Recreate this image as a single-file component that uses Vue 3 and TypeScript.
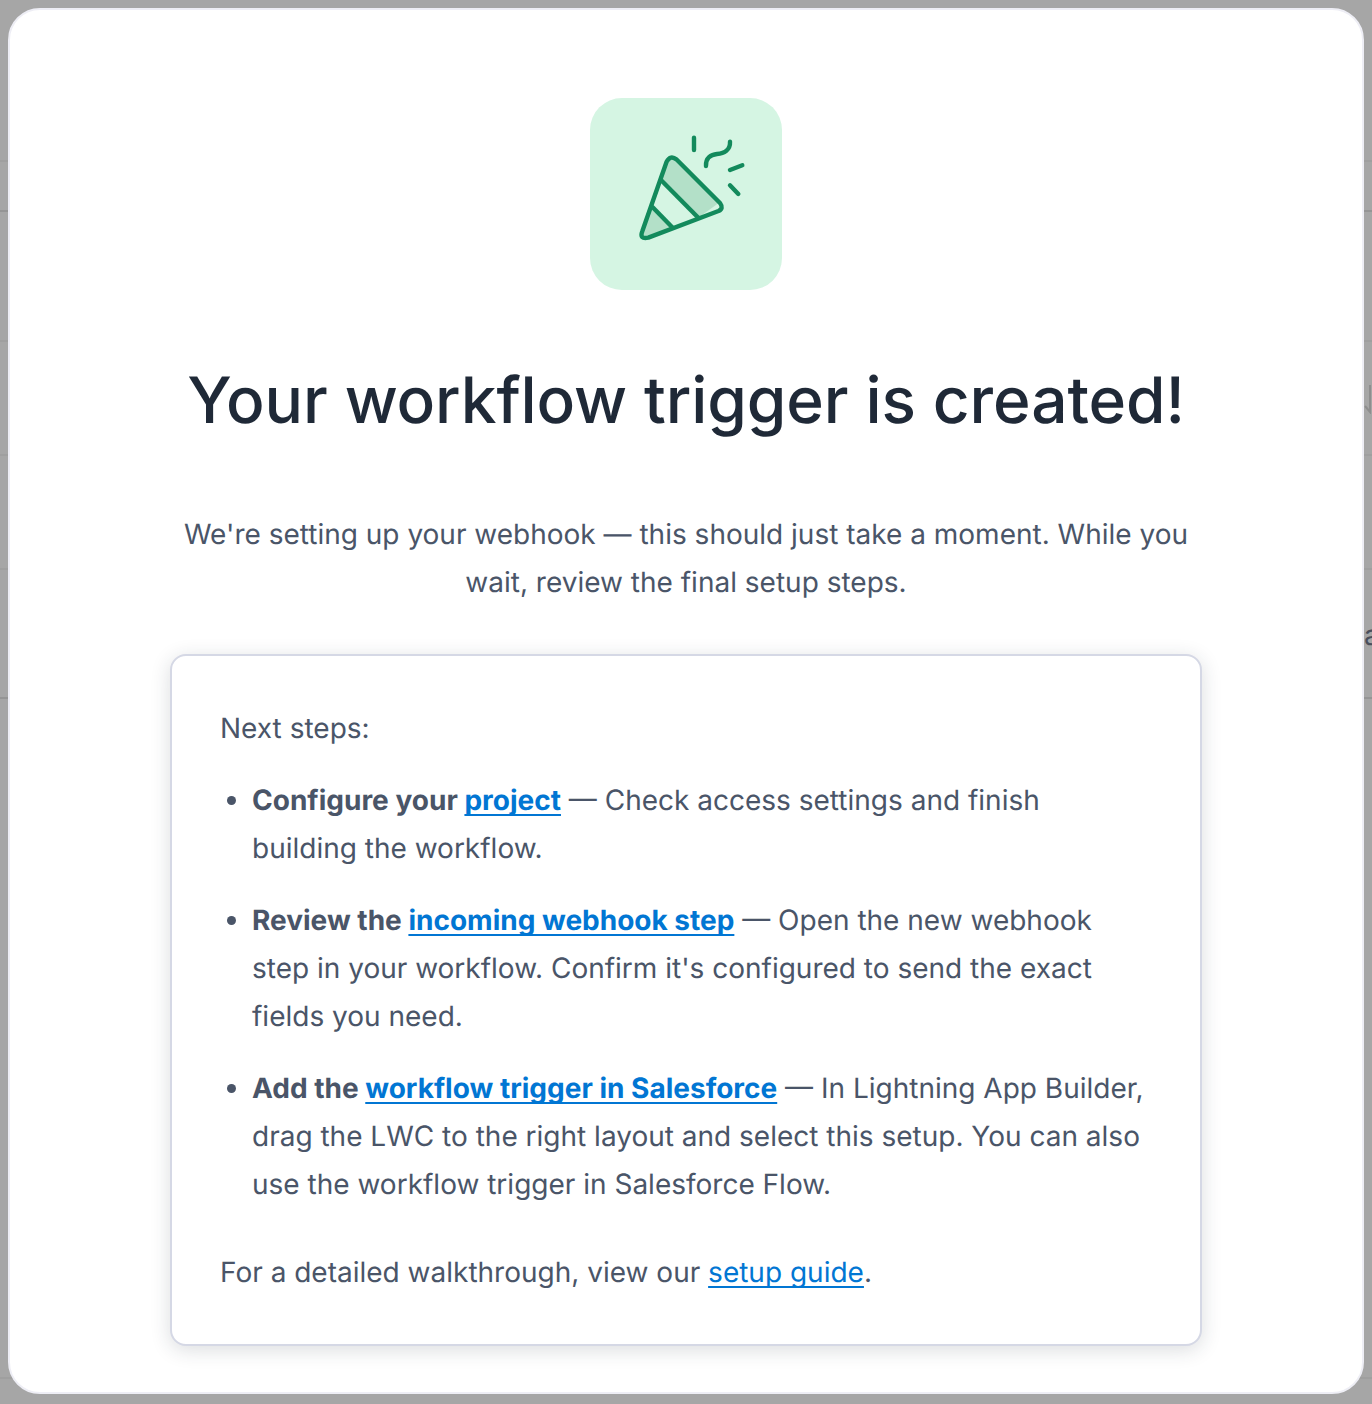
<template>
  <div class="page">
    <div class="backdrop" aria-hidden="true">
      <div class="backdrop__row" style="height: 162px"></div>
      <div class="backdrop__row backdrop__row--dark" style="height: 50px"></div>
      <div class="backdrop__row" style="height: 130px"></div>
      <div class="backdrop__row" style="height: 114px"></div>
      <div class="backdrop__row" style="height: 114px"></div>
      <div class="backdrop__row backdrop__row--dark" style="height: 129px"></div>
      <div class="backdrop__row" style="height: 680px"></div>
      <span class="backdrop__letter">a</span>
      <svg class="backdrop__arrow" viewBox="0 0 8 30" width="8" height="30">
        <path d="M6 1v27L1 22" fill="none" stroke="#8e8e8e" stroke-width="2" />
      </svg>
    </div>

    <section class="modal">
      <div class="modal__icon">
        <svg viewBox="0 0 192 192" width="192" height="192" aria-hidden="true">
          <path d="M77 64 80 60Q84 58 87.3 62L130 104 108.3 119.7 71.7 82.7ZM62.7 109.3 81.7 128.7 58 139.5Q50 142.5 52 134Z" fill="#b3e0c8" />
          <g fill="none" stroke="#138a5c" stroke-width="4.4" stroke-linecap="round" stroke-linejoin="round">
            <path d="M52.3 133.2 76.6 63.7Q80.5 56.5 86.6 61.5L130 105Q134 110.5 128.5 113L58.3 139.6Q49 141.5 52.3 133.2Z" />
            <path d="M71.7 82.7 108.3 119.7" />
            <path d="M62.7 109.3 81.7 128.7" />
            <path d="M104 39.7V52" />
            <path d="M116 68C115.5 60 121 56.5 127 56C134 55.5 140.5 52 140 43.7" />
            <path d="M140 72 152.3 67.3" />
            <path d="M140 87.3 148.3 96" />
          </g>
        </svg>
      </div>

      <h1 class="modal__title">Your workflow trigger is created!</h1>
      <p class="modal__lead">
        We're setting up your webhook — this should just take a moment. While you wait, review the final setup steps.
      </p>

      <div class="card">
        <p class="card__text">Next steps:</p>
        <ul class="steps">
          <li v-for="step in steps" :key="step.link" class="steps__item">
            <strong>{{ step.lead }} <a href="#" class="link">{{ step.link }}</a></strong> — {{ step.body }}
          </li>
        </ul>
        <p class="card__text">
          For a detailed walkthrough, view our <a href="#" class="link">setup guide</a>.
        </p>
      </div>
    </section>
  </div>
</template>

<script setup lang="ts">
interface Step {
  lead: string
  link: string
  body: string
}

const steps: Step[] = [
  {
    lead: 'Configure your',
    link: 'project',
    body: 'Check access settings and finish building the workflow.',
  },
  {
    lead: 'Review the',
    link: 'incoming webhook step',
    body: "Open the new webhook step in your workflow. Confirm it's configured to send the exact fields you need.",
  },
  {
    lead: 'Add the',
    link: 'workflow trigger in Salesforce',
    body: 'In Lightning App Builder, drag the LWC to the right layout and select this setup. You can also use the workflow trigger in Salesforce Flow.',
  },
]
</script>

<style>
html,
body {
  margin: 0;
  background: #a6a6a6;
}
</style>

<style scoped>
.page {
  position: relative;
  width: 1372px;
  height: 1404px;
  overflow: hidden;
  background: #a6a6a6;
  font-family: Inter, "Liberation Sans", sans-serif;
  text-rendering: geometricPrecision;
}

.backdrop {
  position: absolute;
  inset: 0;
}
.backdrop__row {
  box-sizing: border-box;
  border-bottom: 2px solid #9f9f9f;
}
.backdrop__row--dark {
  border-bottom-color: #959595;
}
.backdrop__letter {
  position: absolute;
  left: 1364px;
  top: 618px;
  font-size: 28px;
  line-height: 34px;
  color: #4a4f5c;
}
.backdrop__arrow {
  position: absolute;
  left: 1364px;
  top: 384px;
}

.modal {
  position: absolute;
  left: 8px;
  top: 8px;
  box-sizing: border-box;
  width: 1356px;
  height: 1386px;
  display: flex;
  flex-direction: column;
  align-items: center;
  padding-top: 88px;
  background: #fff;
  border: 2px solid #eeeef5;
  border-radius: 32px;
}

.modal__icon {
  width: 192px;
  height: 192px;
  border-radius: 32px;
  background: #d5f5e3;
}
.modal__icon svg {
  display: block;
}

.modal__title {
  margin: 65px 0 0;
  font-size: 64px;
  line-height: 92px;
  font-weight: 500;
  letter-spacing: -0.1px;
  color: #1f2937;
  white-space: nowrap;
}

.modal__lead {
  width: 1030px;
  margin: 63px 0 0;
  font-size: 28px;
  line-height: 48px;
  text-align: center;
  color: #4a5568;
}

.card {
  box-sizing: border-box;
  width: 1032px;
  margin-top: 48px;
  padding: 48px;
  background: #fff;
  border: 2px solid #d5d8e5;
  border-radius: 16px;
  box-shadow: 0 4px 20px rgba(31, 41, 55, 0.16);
  font-size: 28px;
  line-height: 48px;
  color: #4a5568;
}

.card__text {
  margin: 0;
}

.steps {
  margin: 24px 0 40px;
  padding: 0 4px 0 32px;
}
.steps__item + .steps__item {
  margin-top: 24px;
}
.steps__item strong {
  font-weight: 700;
}

.link {
  color: #0176d3;
  text-decoration: underline;
  text-decoration-skip-ink: none;
  text-underline-offset: 4px;
  text-decoration-thickness: 2px;
}
</style>
